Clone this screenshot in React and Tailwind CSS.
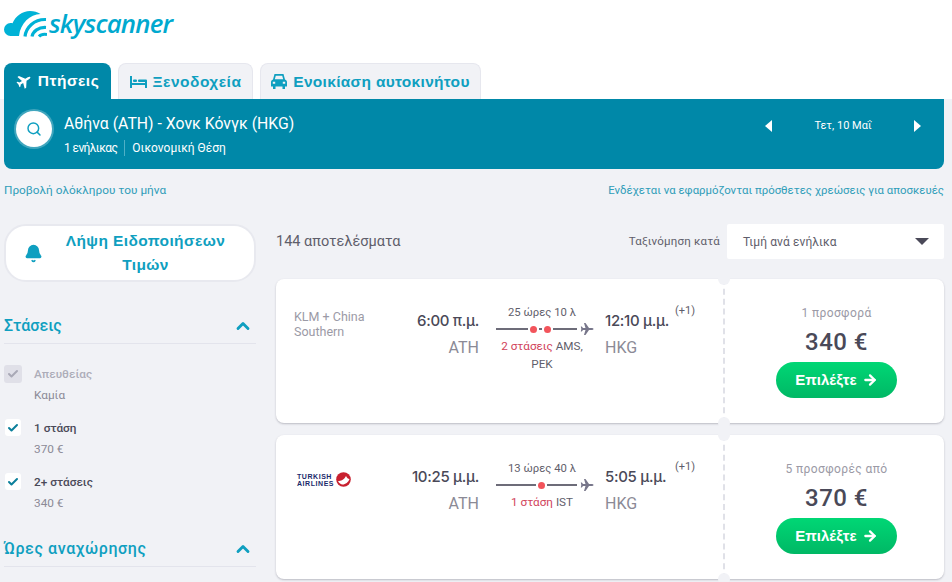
import { Search, Bell, ChevronUp, Check, ArrowRight } from 'lucide-react';

const FONT = "font-['Roboto','Noto_Sans',sans-serif]";

// Logo: nube con arcos
const Logo = () => (
  <svg width="43" height="28" viewBox="0 0 43 28" className="block shrink-0">
    <path d="M6.500 26a6.500 6.500 0 0 1 0-13c.8 0 1.500.1 2 .3C11.500 6 18.500 1 26 1c4 0 7.500 1 10.500 3C26 4.500 16.500 13 15 26z" fill="#00b2d6" />
    <path d="M21 26.500C22 17.500 30 9 42 9.500" fill="none" stroke="#00b2d6" strokeWidth="3.200" />
    <path d="M28 26.500c1-5 6.500-9.500 14-9" fill="none" stroke="#00b2d6" strokeWidth="3.200" />
    <path d="M35 26.500c1.500-1.800 4.500-2.500 8-2" fill="none" stroke="#00b2d6" strokeWidth="3" />
  </svg>
);

const PlaneIcon = ({ size = 14, color = '#77768a', className = '' }) => (
  <svg width={size} height={size} viewBox="0 0 14 14" className={className}>
    <path d="M13.500 7c0-.6-1-1-2-1H9L5.500 1H4l1.500 5H3L1.800 4.500H.8L1.300 7 .8 9.500h1L3 8h2.500L4 13h1.500L9 8h2.500c1 0 2-.4 2-1z" fill={color} />
  </svg>
);

const TabPlane = () => <PlaneIcon size={16} color="#fff" className="-rotate-[32deg]" />;

const TabBed = () => (
  <svg width="17" height="12" viewBox="0 0 17 12" fill="currentColor">
    <rect x="0" y="0" width="2" height="12" />
    <rect x="0" y="7" width="17" height="2" />
    <rect x="15" y="5" width="2" height="7" />
    <rect x="3" y="3.500" width="4" height="2.500" rx="1" />
    <rect x="8" y="3.500" width="9" height="2.500" rx="1" />
  </svg>
);

const TabCar = () => (
  <svg width="16" height="15" viewBox="0 0 16 15" fill="currentColor">
    <path
      fillRule="evenodd"
      d="M3.500 0h9L14 5.500c1.200.5 2 1.500 2 2.700V12.500h-2V15h-2.500v-2.500h-7V15H2v-2.500H0V8.200c0-1.200.8-2.200 2-2.700zM4.800 1.800 3.800 5.200h8.400l-1-3.400zM1.800 7.700v2h2.400v-2zM11.800 7.700v2h2.400v-2z"
    />
  </svg>
);

const Tab = ({ icon: Icon, label, active, className }) => (
  <div
    className={`flex h-9 items-center justify-center gap-[6px] rounded-t-lg font-['Liberation_Sans',sans-serif] text-[15.5px] font-bold ${className} ${
      active ? 'bg-[#0088a8] text-white' : 'border border-b-0 border-[#e6e7ee] bg-[#f1f2f6] text-[#0f9fc0]'
    }`}
  >
    <Icon />
    {label}
  </div>
);

const CheckRow = ({ label, price, disabled, className }) => (
  <div className={`flex ${className}`}>
    <div
      className={`mt-[1px] flex items-center justify-center rounded-[3px] ${
        disabled ? 'mr-[12px] h-[18px] w-[18px] bg-[#e0e0e8] text-[#a9a9b6]' : 'ml-[1px] mr-[13px] h-[17px] w-[16px] bg-white text-[#0b7f9b]'
      }`}
    >
      <Check size={12} strokeWidth={4} />
    </div>
    <div className="text-[11.8px] leading-[21px]">
      <div className={disabled ? 'font-medium text-[#adadb9]' : 'font-medium text-[#4a4958]'}>{label}</div>
      <div className="text-[#8b8a96]">{price}</div>
    </div>
  </div>
);

const FilterTitle = ({ title, className = '' }) => (
  <div className="flex h-[34px] items-center justify-between border-b border-[#e3e4ec] pb-[2px] pr-[3px]">
    <span className={`text-[16px] font-medium text-[#0f9fc0] ${className}`}>{title}</span>
    <ChevronUp size={20} strokeWidth={3.4} className="text-[#0f9fc0]" />
  </div>
);

const TurkishLogo = () => (
  <div className="ml-[3px] mt-[7px] flex items-center gap-[2px]">
    <div className="font-['Liberation_Sans',sans-serif] text-[7px] font-bold leading-[7px] tracking-[0.55px] text-[#1b2a6b]">
      <div>TURKISH</div>
      <div>AIRLINES</div>
    </div>
    <svg width="15" height="15" viewBox="0 0 15 15">
      <circle cx="7.500" cy="7.500" r="7.300" fill="#c8202f" />
      <path d="M2 9c3 0 6-1 8-5 1 2 2 3 3.500 3-1 3-4 5.500-7 5.500C5 12.500 3 11 2 9z" fill="#fff" />
    </svg>
  </div>
);

const FlightCard = ({ airline, depart, arrive, duration, stopDots, stops, via, viaNext, offers, price, className }) => (
  <div className={`relative flex h-[144px] rounded-lg bg-white shadow-[0_1px_2px_rgba(60,60,80,0.3)] ${className}`}>
    <div className="flex w-[447px] pt-[30px]">
      <div className="w-[120px] pl-[18px] text-[12.5px] leading-[15px] text-[#9b9aa6]">{airline}</div>
      <div className="w-[83px] text-right">
        <div className="font-['Inter',sans-serif] text-[15px] font-medium leading-[24px] tracking-[-0.3px] text-[#4a4958]">{depart}</div>
        <div className="mt-[3px] text-[16px] leading-[24px] text-[#8b8a96]">ATH</div>
      </div>
      <div className="-mt-[4px] ml-[17px] w-[98px] text-center">
        <div className="pr-[6px] text-[11.3px] leading-[16px] text-[#5f5e6b]">{duration}</div>
        <div className="mt-[3px] flex h-[10px] items-center">
          <div className="flex flex-1 items-center justify-center gap-[2px]">
            <div className="h-[2px] flex-[1.3_1_0] bg-[#6d6c79]" />
            {stopDots === 2 ? (
              <>
                <div className="h-[7px] w-[7px] rounded-full bg-[#f2545b]" />
                <div className="h-[2px] w-[3px] bg-[#6d6c79]" />
                <div className="h-[7px] w-[7px] rounded-full bg-[#f2545b]" />
              </>
            ) : (
              <div className="h-[7px] w-[7px] rounded-full bg-[#f2545b]" />
            )}
            <div className="h-[2px] flex-1 bg-[#6d6c79]" />
          </div>
          <PlaneIcon className="ml-[3px] shrink-0" />
        </div>
        <div className="mt-[3px] pr-[6px] text-[11.7px] leading-[18px] text-[#5f5e6b]">
          <div>
            <span className="text-[#d1435b]">{stops}</span> {via}
          </div>
          {viaNext && <div>{viaNext}</div>}
        </div>
      </div>
      <div className="ml-[11px] whitespace-nowrap">
        <div className="relative font-['Inter',sans-serif] text-[15px] font-medium leading-[24px] tracking-[-0.3px] text-[#4a4958]">
          {arrive}
          <span className="absolute left-[70px] top-[-10px] font-['Roboto',sans-serif] text-[11px] font-normal tracking-normal text-[#5f5e6b]">(+1)</span>
        </div>
        <div className="mt-[3px] text-[16px] leading-[24px] text-[#8b8a96]">HKG</div>
      </div>
    </div>
    <div className="relative flex flex-1 flex-col items-center border-l-2 border-dashed border-[#e0e1e8] pl-[4px] pt-[26px]">
      <div className="absolute left-[-7px] top-[-6px] h-[12px] w-[12px] rounded-full bg-[#f1f2f6]" />
      <div className="absolute bottom-[-6px] left-[-7px] h-[12px] w-[12px] rounded-full bg-[#f1f2f6]" />
      <div className="text-[12px] leading-[16px] tracking-[0.4px] text-[#9b9aa6]">{offers}</div>
      <div className="mt-[5px] text-[24px] font-medium leading-[32px] tracking-[0.5px] text-[#4a4958]">{price}</div>
      <button className="mt-[4px] flex h-9 w-[121px] items-center justify-center gap-[5px] rounded-full bg-gradient-to-b from-[#00d775] to-[#00b865] font-['Liberation_Sans',sans-serif] text-[15px] font-bold text-white">
        Επιλέξτε
        <ArrowRight size={16} strokeWidth={3.4} />
      </button>
    </div>
  </div>
);

const App = () => {
  return (
    <div className={`h-[582px] w-[952px] overflow-hidden bg-[#f1f2f6] ${FONT}`}>
      <div className="h-[99px] bg-white pl-1 pt-[9px]">
        <div className="flex h-[30px] items-center gap-[2px]">
          <Logo />
          <span className="font-['Open_Sans',sans-serif] text-[25.8px] font-semibold italic leading-none tracking-[-0.8px] text-[#00a9cf]">
            skyscanner
          </span>
        </div>
        <div className="mt-[24px] flex gap-[7px]">
          <Tab icon={TabPlane} label="Πτήσεις" active className="w-[107px] tracking-[0.5px]" />
          <Tab icon={TabBed} label="Ξενοδοχεία" className="w-[135px] tracking-[0.5px]" />
          <Tab icon={TabCar} label="Ενοικίαση αυτοκινήτου" className="w-[221px] tracking-[0.3px]" />
        </div>
      </div>

      <div className="ml-1 mr-2 flex h-[70px] items-start rounded-b-lg bg-[#0088a8] pl-3 pr-[23px] pt-[12px] text-white">
        <div className="flex h-9 w-9 items-center justify-center rounded-full bg-white text-[#0f9fc0] shadow-[0_0_0_2px_rgba(255,255,255,0.25)]">
          <Search size={16} strokeWidth={2.2} />
        </div>
        <div className="ml-[12px] mt-[1px]">
          <div className="text-[15.8px] leading-[24px]">Αθήνα (ATH) - Χονκ Κόνγκ (HKG)</div>
          <div className="mt-[4px] flex items-center text-[12px] leading-[16px]">
            <span className="border-r border-[#4fb0c6] pr-[7px] tracking-[-0.6px]">1 ενήλικας</span>
            <span className="pl-[7px]">Οικονομική Θέση</span>
          </div>
        </div>
        <div className="ml-auto mt-[7px] flex w-[156px] items-center justify-between">
          <div className="h-0 w-0 border-y-[6px] border-r-[7px] border-y-transparent border-r-white" />
          <span className="text-[11px] leading-[16px]">Τετ, 10 Μαΐ</span>
          <div className="h-0 w-0 border-y-[6px] border-l-[7px] border-y-transparent border-l-white" />
        </div>
      </div>

      <div className="ml-1 mr-2 mt-[13px] flex justify-between leading-[16px] text-[#2f9db9]">
        <span className="text-[11.8px]">Προβολή ολόκληρου του μήνα</span>
        <span className="text-[11.4px]">Ενδέχεται να εφαρμόζονται πρόσθετες χρεώσεις για αποσκευές</span>
      </div>

      <div className="ml-1 mr-2 mt-[26px] flex gap-[20px]">
        <aside className="w-[252px]">
          <div className="flex h-[58px] items-center rounded-[22px] border-2 border-[#e8e9ef] bg-white pl-[18px] pr-[6px] text-[#0f9fc0]">
            <Bell size={19} fill="currentColor" strokeWidth={2} />
            <div className="flex-1 text-center font-['Liberation_Sans',sans-serif] text-[15.5px] font-bold leading-[24px] tracking-[0.4px]">
              Λήψη Ειδοποιήσεων
              <br />
              Τιμών
            </div>
          </div>
          <div className="mt-[28px]">
            <FilterTitle title="Στάσεις" />
          </div>
          <CheckRow label="Απευθείας" price="Καμία" disabled className="mt-[20px]" />
          <CheckRow label="1 στάση" price="370 €" className="mt-[12px]" />
          <CheckRow label="2+ στάσεις" price="340 €" className="mt-[12px]" />
          <div className="mt-[19px]">
            <FilterTitle title="Ώρες αναχώρησης" className="tracking-[0.6px]" />
          </div>
        </aside>

        <main className="flex-1">
          <div className="flex h-[35px] items-center">
            <span className="text-[14.5px] text-[#5f5e6b]">144 αποτελέσματα</span>
            <span className="ml-auto text-[11.5px] tracking-[0.2px] text-[#5f5e6b]">Ταξινόμηση κατά</span>
            <div className="ml-[7px] flex h-[35px] w-[217px] items-center justify-between rounded-[2px] bg-white pl-4 pr-[15px] text-[12px] tracking-[0.1px] text-[#5f5e6b]">
              Τιμή ανά ενήλικα
              <div className="h-0 w-0 border-x-[7px] border-t-[7px] border-x-transparent border-t-[#4a4958]" />
            </div>
          </div>
          <FlightCard
            className="mt-[20px]"
            airline="KLM + China Southern"
            depart="6:00 π.μ."
            arrive="12:10 μ.μ."
            duration="25 ώρες 10 λ"
            stopDots={2}
            stops="2 στάσεις"
            via="AMS,"
            viaNext="PEK"
            offers="1 προσφορά"
            price="340 €"
          />
          <FlightCard
            className="mt-[12px]"
            airline={<TurkishLogo />}
            depart="10:25 μ.μ."
            arrive="5:05 μ.μ."
            duration="13 ώρες 40 λ"
            stopDots={1}
            stops="1 στάση"
            via="IST"
            offers="5 προσφορές από"
            price="370 €"
          />
        </main>
      </div>
    </div>
  );
};

export default App;
